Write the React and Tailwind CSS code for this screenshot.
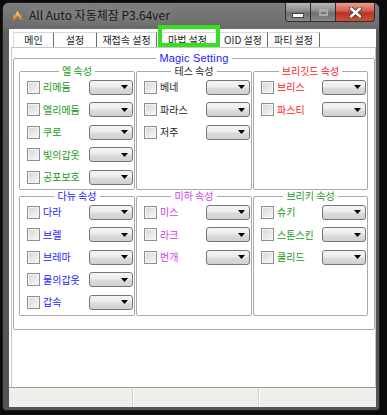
import React from 'react';

const groups = [
  { title: '엘 속성', color: 'text-[#1c9a1c]', items: ['리메듐', '엘리메듐', '쿠로', '빛의갑옷', '공포보호'] },
  { title: '테스 속성', color: 'text-[#262626]', items: ['베네', '파라스', '저주'] },
  { title: '브리깃드 속성', color: 'text-[#ff2020]', items: ['브리스', '파스티'] },
  { title: '다뉴 속성', color: 'text-[#1a1aff]', items: ['다라', '브렐', '브레마', '물의갑옷', '갑속'] },
  { title: '미하 속성', color: 'text-[#d23cf0]', items: ['미스', '라크', '번개'] },
  { title: '브리키 속성', color: 'text-[#1c9a1c]', items: ['슈키', '스톤스킨', '쿨리드'] },
];

const tabs = [
  { label: '메인', w: 'w-[41px]' },
  { label: '설정', w: 'w-[43px]' },
  { label: '재접속 설정', w: 'w-[60px]' },
  { label: '마법 설정', w: 'w-[62px]' },
  { label: 'OID 설정', w: 'w-[49px]' },
  { label: '파티 설정', w: 'w-[52px]' },
];

function CheckBox() {
  return (
    <div className="w-[13px] h-[13px] shrink-0 border border-[#8e8f8f] bg-[linear-gradient(135deg,#d6d6d6,#f8f8f8)] shadow-[inset_0_0_0_1px_#f4f4f4]" />
  );
}

function Combo() {
  return (
    <div className="ml-auto mr-px w-[44px] h-[15px] shrink-0 rounded-[3px] border border-[#767676] bg-[linear-gradient(to_bottom,#f5f5f5,#ececec_45%,#dcdcdc_55%,#d0d0d0)] flex items-center justify-end pr-[4px]">
      <svg width="7" height="4" viewBox="0 0 7 4">
        <path d="M0 0H7L3.5 4Z" fill="#000" />
      </svg>
    </div>
  );
}

function Group({ title, color, items, h }) {
  return (
    <fieldset className={`border border-[#a9a9a9] rounded-[2px] ${h}`}>
      <legend className={`mx-auto px-[3px] text-[10px] leading-[10px] ${color}`}>{title}</legend>
      <div className="flex flex-col">
        {items.map((it) => (
          <div key={it} className="h-[22.5px] flex items-center pl-[7px]">
            <CheckBox />
            <span className={`ml-[3px] text-[10px] leading-[12px] ${color}`}>{it}</span>
            <Combo />
          </div>
        ))}
      </div>
    </fieldset>
  );
}

export default function App() {
  return (
    <div className="relative w-[387px] h-[415px] overflow-hidden bg-[#0b0b0b] font-['Noto_Sans_CJK_KR','Noto_Sans',sans-serif]">
      <div className="ml-[2px] mt-[2px] w-[378px] h-[409px] flex flex-col border border-[#1c1c1c] rounded-t-[7px] rounded-b-[4px] bg-[linear-gradient(to_bottom,#6c6c6c,#5a5a5a_10%,#545454)]">
        {/* Title bar */}
        <div className="h-[26px] flex items-start rounded-t-[6px] bg-[linear-gradient(to_bottom,#7c7c7c,#6a6a6a)]">
          <div className="h-[24px] flex items-center pl-[9px]">
            <svg width="11" height="9" viewBox="0 0 11 9">
              <defs>
                <linearGradient id="ic" x1="0" y1="0" x2="0" y2="1">
                  <stop offset="0" stopColor="#ffe27a" />
                  <stop offset="1" stopColor="#d07a10" />
                </linearGradient>
              </defs>
              <path d="M5.5 0L11 9H8.2L5.5 4.2L2.8 9H0Z M1 3L2.5 5.5L1.6 7Z M10 3L8.5 5.5L9.4 7Z" fill="url(#ic)" />
            </svg>
            <span className="ml-[6px] text-[12px] leading-[14px] text-[#151515] [text-shadow:0_0_8px_rgba(255,255,255,0.45)]">
              All Auto 자동체잠 P3.64ver
            </span>
          </div>
          <div className="ml-auto mr-[4px] flex">
            <div className="w-[26px] h-[19px] rounded-bl-[4px] border border-t-0 border-[#2e2e2e] bg-[linear-gradient(to_bottom,#b8b8b8,#8c8c8c_45%,#6e6e6e_55%,#8a8a8a)] flex items-end justify-center pb-[4px]">
              <div className="w-[10px] h-[3px] bg-white border border-[#444] box-content -mb-px" />
            </div>
            <div className="w-[25px] h-[19px] border-b border-r border-[#2e2e2e] bg-[linear-gradient(to_bottom,#b8b8b8,#8c8c8c_45%,#6e6e6e_55%,#8a8a8a)] flex items-center justify-center">
              <div className="w-[9px] h-[7px] border-2 border-[#a9a9a9] border-t-[3px]" />
            </div>
            <div className="w-[39px] h-[19px] rounded-br-[4px] border border-t-0 border-l-0 border-[#2e2e2e] bg-[linear-gradient(to_bottom,#e9a093,#d3594a_45%,#b8321f_55%,#c9533a)] flex items-center justify-center">
              <svg width="13" height="11" viewBox="0 0 13 11">
                <path d="M2 1.5L11 9.5M11 1.5L2 9.5" stroke="#3a3a3a" strokeWidth="4.2" strokeLinecap="round" />
                <path d="M2 1.5L11 9.5M11 1.5L2 9.5" stroke="#ffffff" strokeWidth="2.4" strokeLinecap="round" />
              </svg>
            </div>
          </div>
        </div>

        {/* Client area */}
        <div className="ml-[6px] mr-[3px] mb-[3px] flex-1 flex flex-col bg-white">
          {/* Tabs */}
          <div className="mt-[3px] ml-[4px] h-[15px] flex">
            {tabs.map((t, i) => (
              <div
                key={t.label}
                className={`${t.w} h-[15px] flex items-center justify-center border-t border-[#d9d9d9] border-r border-r-[#6d6d6d] ${i === 0 ? 'border-l border-l-[#d9d9d9]' : ''} text-[10px] leading-[12px] text-[#1e1e1e]`}
              >
                {t.label}
              </div>
            ))}
          </div>

          {/* Tab panel */}
          <div className="ml-[2px] flex-1 border-t border-l border-r border-[#c6c6c6]">
            <fieldset className="mt-[4px] ml-px w-[362px] border border-[#a9a9a9] rounded-[2px] pb-[13px]">
              <legend className="mx-auto px-[3px] text-[11px] leading-[12px] text-[#1a1aff] font-['Liberation_Sans',sans-serif] tracking-[0.2px]">
                Magic Setting
              </legend>
              <div className="mt-[2px] pl-[5px] grid grid-cols-[116px_116px_115px] gap-x-px gap-y-px">
                {groups.map((g, i) => (
                  <Group key={g.title} {...g} h={i < 3 ? 'h-[124px]' : 'h-[125px]'} />
                ))}
              </div>
            </fieldset>
          </div>

          {/* Status bar */}
          <div className="h-[20px] flex border-t border-[#9c9c9c] bg-[#f0eeeb]">
            <div className="w-[124px] border-r border-[#d4d0cb]" />
            <div className="w-[126px] border-l border-white border-r border-r-[#d4d0cb]" />
            <div className="flex-1 border-l border-white" />
          </div>
        </div>
      </div>

      {/* Green highlight annotation around selected tab */}
      <div className="absolute left-[158px] top-[25px] w-[62px] h-[22px] border-[4px] border-[#35e01c]" />
    </div>
  );
}
